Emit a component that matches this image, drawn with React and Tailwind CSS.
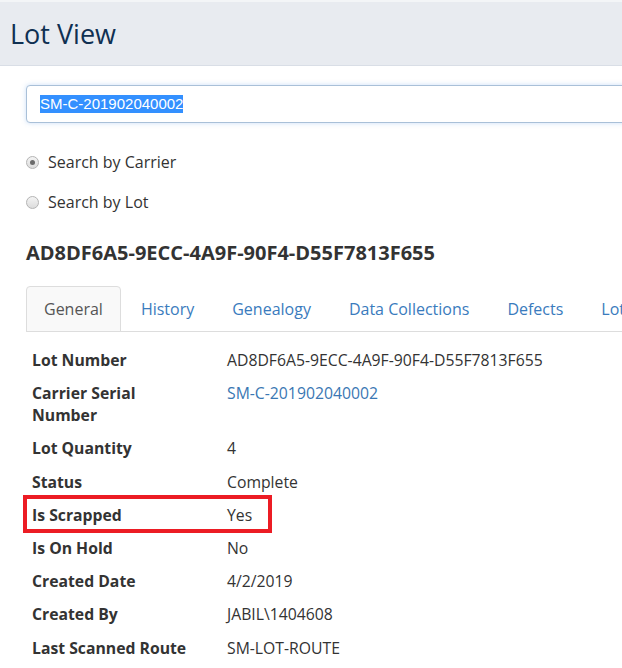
import React from "react";

const rows = [
  { label: "Lot Number", value: "AD8DF6A5-9ECC-4A9F-90F4-D55F7813F655" },
  { label: "Carrier Serial Number", value: "SM-C-201902040002", link: true },
  { label: "Lot Quantity", value: "4" },
  { label: "Status", value: "Complete" },
  { label: "Is Scrapped", value: "Yes", boxed: true },
  { label: "Is On Hold", value: "No" },
  { label: "Created Date", value: "4/2/2019" },
  { label: "Created By", value: "JABIL\\1404608" },
  { label: "Last Scanned Route", value: "SM-LOT-ROUTE" },
];

const tabs = ["General", "History", "Genealogy", "Data Collections", "Defects", "Lot Attributes"];

function Radio({ checked }) {
  return (
    <span className="relative inline-flex h-[13px] w-[13px] items-center justify-center rounded-full border border-[#b4b4b4] bg-gradient-to-b from-[#f4f4f4] to-[#dcdcdc]">
      {checked && <span className="h-[5px] w-[5px] rounded-full bg-[#6b6b6b]" />}
    </span>
  );
}

export default function App() {
  return (
    <div
      className="h-[668px] w-[622px] overflow-hidden bg-white text-[#333]"
      style={{ fontFamily: '"Open Sans", "Noto Sans", sans-serif' }}
    >
      <div className="flex h-[66px] items-center border-b border-[#d9dee6] border-t-2 border-t-[#f3f5f7] bg-[#e8ebf0] pl-[10px]">
        <h1 className="text-[27px] font-normal leading-none text-[#0f3052]">Lot View</h1>
      </div>

      <div className="pl-[26px] pt-[19px]">
        <div className="flex h-[38px] w-[720px] items-center rounded-[4px] border border-[#a9c0d8] bg-white pl-[13px] shadow-[0_0_5px_rgba(102,160,230,0.35)]">
          <span
            className="bg-[#3390ff] text-[15px] leading-[18px] text-white"
            style={{ fontFamily: '"Liberation Sans", Arial, sans-serif' }}
          >
            SM-C-201902040002
          </span>
        </div>

        <div className="mt-[28px] flex flex-col gap-[18px] text-[16px] leading-[22px]">
          <label className="flex items-center gap-[9px]">
            <Radio checked />
            <span>Search by Carrier</span>
          </label>
          <label className="flex items-center gap-[9px]">
            <Radio />
            <span>Search by Lot</span>
          </label>
        </div>

        <h2 className="mt-[27px] text-[20px] font-bold leading-[26px] text-[#333]">
          AD8DF6A5-9ECC-4A9F-90F4-D55F7813F655
        </h2>

        <div className="mt-[20px] flex w-[800px] border-b border-[#ddd] text-[16px] leading-[22px]">
          {tabs.map((t, i) => (
            <div
              key={t}
              className={
                i === 0
                  ? "-mb-px mr-[2px] whitespace-nowrap rounded-t-[4px] border border-[#ddd] bg-[#f9f9f9] px-[17px] py-[11px] text-[#555]"
                  : "-mb-px mr-[2px] whitespace-nowrap border border-transparent px-[17px] py-[11px] text-[#3a7bbd]"
              }
            >
              {t}
            </div>
          ))}
        </div>

        <div className="mt-[11.5px] flex flex-col text-[15.75px] leading-[22px]">
          {rows.map((r) => (
            <div key={r.label} className="relative flex py-[5.6px]">
              <div className="w-[201px] shrink-0 pl-[6px] pr-[36px] font-bold">{r.label}</div>
              <div className={r.link ? "text-[#3a77b3]" : "text-[#333]"}>{r.value}</div>
              {r.boxed && (
                <div className="pointer-events-none absolute left-[-3px] top-[-3px] h-[38px] w-[249px] border-[4px] border-[#ec1c24]" />
              )}
            </div>
          ))}
        </div>
      </div>
    </div>
  );
}
